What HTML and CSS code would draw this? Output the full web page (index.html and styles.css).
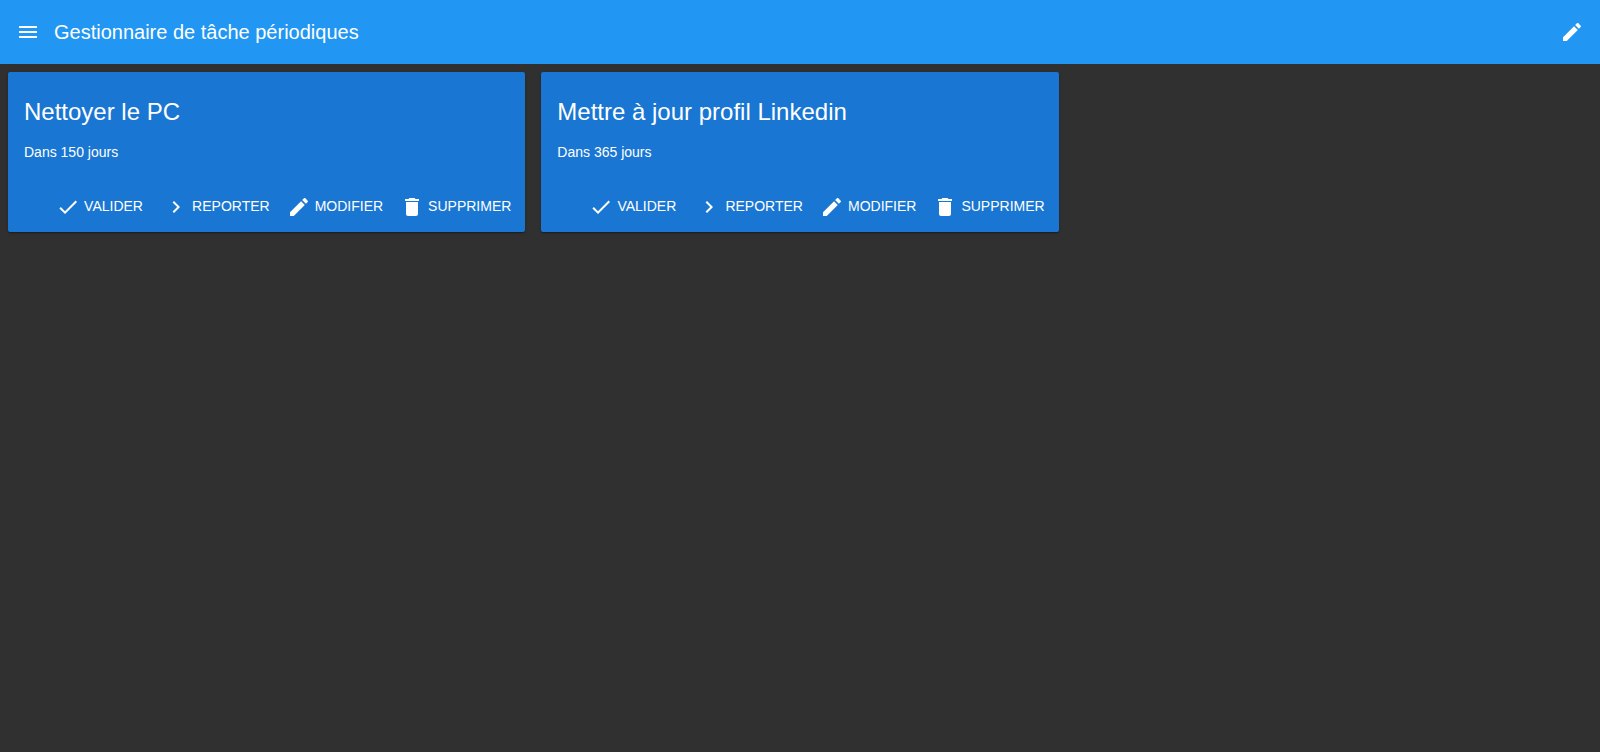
FILE: index.html
```html
<!DOCTYPE html>
<html lang="fr">
<head>
<meta charset="utf-8">
<meta name="viewport" content="width=device-width, initial-scale=1">
<title>Gestionnaire de tâche périodiques</title>
<link rel="stylesheet" href="styles.css">
</head>
<body>
<svg class="sprite" aria-hidden="true">
  <symbol id="menu" viewBox="0 0 24 24"><path d="M3 18h18v-2H3v2zm0-5h18v-2H3v2zm0-7v2h18V6H3z"/></symbol>
  <symbol id="check" viewBox="0 0 24 24"><path d="M9 16.17L4.83 12l-1.42 1.41L9 19 21 7l-1.41-1.41z"/></symbol>
  <symbol id="chevron" viewBox="0 0 24 24"><path d="M10 6L8.59 7.41 13.17 12l-4.58 4.59L10 18l6-6z"/></symbol>
  <symbol id="edit" viewBox="0 0 24 24"><path d="M3 17.25V21h3.75L17.81 9.94l-3.75-3.75L3 17.25zM20.71 7.04c.39-.39.39-1.02 0-1.41l-2.34-2.34c-.39-.39-1.02-.39-1.41 0l-1.83 1.83 3.75 3.75 1.83-1.83z"/></symbol>
  <symbol id="delete" viewBox="0 0 24 24"><path d="M6 19c0 1.1.9 2 2 2h8c1.1 0 2-.9 2-2V7H6v12zM19 4h-3.5l-1-1h-5l-1 1H5v2h14V4z"/></symbol>
</svg>
<header class="toolbar">
  <button class="icon-button" type="button" aria-label="Menu"><svg class="icon"><use href="#menu"/></svg></button>
  <h1 class="toolbar-title">Gestionnaire de tâche périodiques</h1>
  <button class="icon-button" type="button" aria-label="Modifier"><svg class="icon"><use href="#edit"/></svg></button>
</header>
<main class="tasks">
  <article class="card">
    <div class="card-text">
      <h2 class="card-title">Nettoyer le PC</h2>
      <p class="card-due">Dans 150 jours</p>
    </div>
    <div class="card-actions">
      <button class="action" type="button"><svg class="icon"><use href="#check"/></svg><span class="action-label">Valider</span></button>
      <button class="action" type="button"><svg class="icon"><use href="#chevron"/></svg><span class="action-label">Reporter</span></button>
      <button class="action" type="button"><svg class="icon"><use href="#edit"/></svg><span class="action-label">Modifier</span></button>
      <button class="action" type="button"><svg class="icon"><use href="#delete"/></svg><span class="action-label">Supprimer</span></button>
    </div>
  </article>
  <article class="card">
    <div class="card-text">
      <h2 class="card-title">Mettre à jour profil Linkedin</h2>
      <p class="card-due">Dans 365 jours</p>
    </div>
    <div class="card-actions">
      <button class="action" type="button"><svg class="icon"><use href="#check"/></svg><span class="action-label">Valider</span></button>
      <button class="action" type="button"><svg class="icon"><use href="#chevron"/></svg><span class="action-label">Reporter</span></button>
      <button class="action" type="button"><svg class="icon"><use href="#edit"/></svg><span class="action-label">Modifier</span></button>
      <button class="action" type="button"><svg class="icon"><use href="#delete"/></svg><span class="action-label">Supprimer</span></button>
    </div>
  </article>
</main>
</body>
</html>
```
FILE: styles.css
```css
* { box-sizing: border-box; }
body {
  margin: 0;
  background: #303030;
  color: #fff;
  font-family: "Liberation Sans", Arial, sans-serif;
}
.sprite { display: none; }
.icon { width: 24px; height: 24px; fill: currentColor; flex: none; }
button {
  border: 0;
  padding: 0;
  background: none;
  color: inherit;
  font: inherit;
  cursor: pointer;
}
.toolbar {
  display: flex;
  align-items: center;
  height: 64px;
  padding: 0 8px;
  background: #2196f3;
}
.icon-button {
  display: flex;
  align-items: center;
  justify-content: center;
  width: 40px;
  height: 40px;
}
.toolbar-title {
  flex: 1;
  margin: 0;
  padding-left: 6px;
  font-size: 20px;
  line-height: 24px;
  font-weight: 400;
}
.tasks {
  display: grid;
  grid-template-columns: repeat(3, 1fr);
  gap: 16px;
  padding: 8px;
}
.card {
  border-radius: 2px;
  background: #1976d2;
  box-shadow: 0 1px 3px rgba(0, 0, 0, 0.2), 0 1px 1px rgba(0, 0, 0, 0.14), 0 2px 1px -1px rgba(0, 0, 0, 0.12);
}
.card-text { padding: 24px 16px 20px; }
.card-title {
  margin: 0;
  font-size: 24px;
  line-height: 32px;
  font-weight: 400;
}
.card-due {
  margin: 14px 0 0;
  font-size: 14px;
  line-height: 20px;
}
.card-actions {
  display: flex;
  flex-wrap: wrap;
  justify-content: flex-end;
  gap: 5px;
  padding: 8px;
}
.action {
  display: flex;
  align-items: center;
  gap: 4px;
  min-width: 103px;
  height: 34px;
  padding: 0 6px;
  font-size: 14px;
  line-height: 20px;
  text-transform: uppercase;
}
.action-label { padding-bottom: 2px; }
```
